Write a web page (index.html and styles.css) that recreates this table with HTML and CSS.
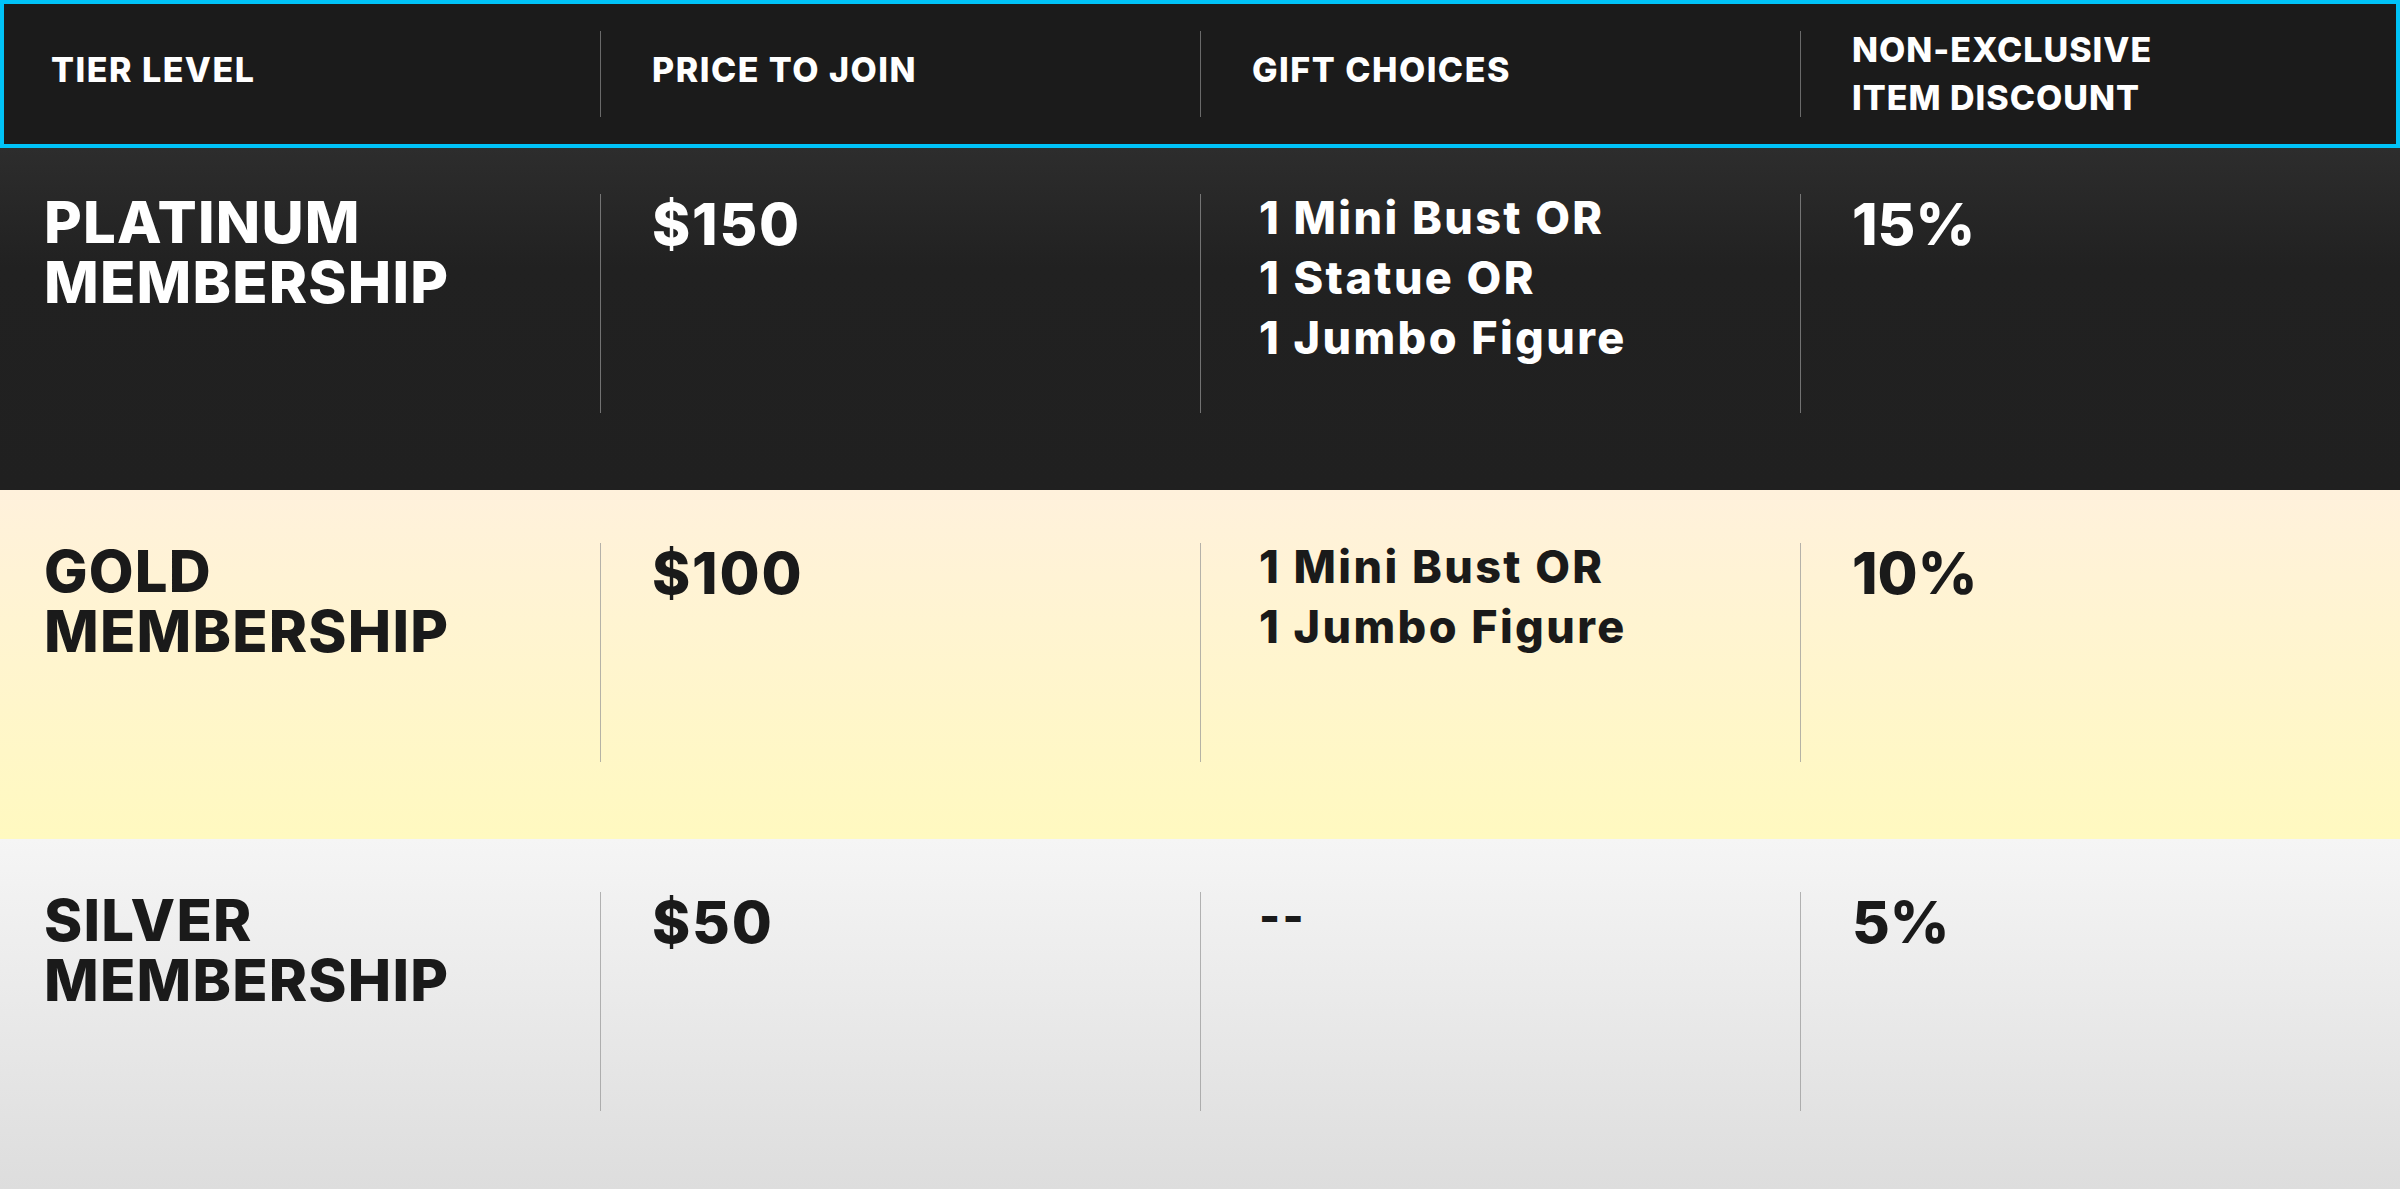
FILE: index.html
```html
<!DOCTYPE html>
<html lang="en">
<head>
<meta charset="utf-8">
<title>Membership Tiers</title>
<link rel="stylesheet" href="styles.css">
</head>
<body>
<div class="table">
  <div class="head">
    <div class="hcell single">Tier Level</div>
    <div class="hcell single div">Price to Join</div>
    <div class="hcell single div">Gift Choices</div>
    <div class="hcell double div">Non-Exclusive<br>Item Discount</div>
  </div>
  <div class="row platinum">
    <div class="cell tier">Platinum<br>Membership</div>
    <div class="cell div big price">$150</div>
    <div class="cell div gift"><div class="gift-text">1 Mini Bust OR<br>1 Statue OR<br>1 Jumbo Figure</div></div>
    <div class="cell div big">15%</div>
  </div>
  <div class="row gold">
    <div class="cell tier">Gold<br>Membership</div>
    <div class="cell div big price">$100</div>
    <div class="cell div gift"><div class="gift-text">1 Mini Bust OR<br>1 Jumbo Figure</div></div>
    <div class="cell div big">10%</div>
  </div>
  <div class="row silver">
    <div class="cell tier">Silver<br>Membership</div>
    <div class="cell div big price">$50</div>
    <div class="cell div gift"><div class="gift-text">--</div></div>
    <div class="cell div big">5%</div>
  </div>
</div>
</body>
</html>
```
FILE: styles.css
```css
* { box-sizing: border-box; }
html, body { margin: 0; padding: 0; }
body {
  width: 2400px;
  height: 1189px;
  overflow: hidden;
  font-family: Inter, "Liberation Sans", sans-serif;
  font-weight: 800;
  background: #dddddd;
}
.table { display: flex; flex-direction: column; }
.head {
  height: 148px;
  border: 4px solid #00c3f8;
  background: #1b1b1b;
  display: grid;
  grid-template-columns: 596px 600px 600px 596px;
  align-items: center;
  color: #fff;
}
.hcell {
  height: 86px;
  display: flex;
  align-items: center;
  padding-left: 47px;
  font-size: 34px;
  line-height: 48px;
  letter-spacing: 1.5px;
  text-transform: uppercase;
}
.hcell.single { padding-bottom: 8px; }
.hcell.double { letter-spacing: 1px; }
.hcell.div { border-left: 1px solid #6a6a6a; padding-left: 51px; }
.row {
  display: grid;
  grid-template-columns: repeat(4, 600px);
  align-items: start;
  padding-top: 53px;
  height: 349px;
}
.row.platinum {
  height: 342px;
  padding-top: 46px;
  color: #fff;
  background: linear-gradient(#2d2d2d 0%, #212121 35%, #202020 100%);
}
.row.gold {
  color: #1a1a1a;
  background: linear-gradient(#fff1dc, #fff9c0);
}
.row.silver {
  height: 350px;
  color: #1a1a1a;
  background: linear-gradient(#f5f5f5, #dddddd);
}
.cell {
  height: 219px;
  padding-left: 51px;
}
.cell.tier {
  padding-left: 44px;
  font-size: 58px;
  line-height: 60px;
  letter-spacing: 1.2px;
  text-transform: uppercase;
  margin-top: -2px;
}
.cell.div { border-left: 1px solid rgba(150,150,150,0.7); }
.cell.big { font-size: 58px; line-height: 60px; }
.cell.price { letter-spacing: 1.8px; }
.cell.gift { padding-left: 58px; }
.gift-text {
  font-size: 45px;
  line-height: 60px;
  letter-spacing: 2.4px;
  margin-top: -6px;
}
```
